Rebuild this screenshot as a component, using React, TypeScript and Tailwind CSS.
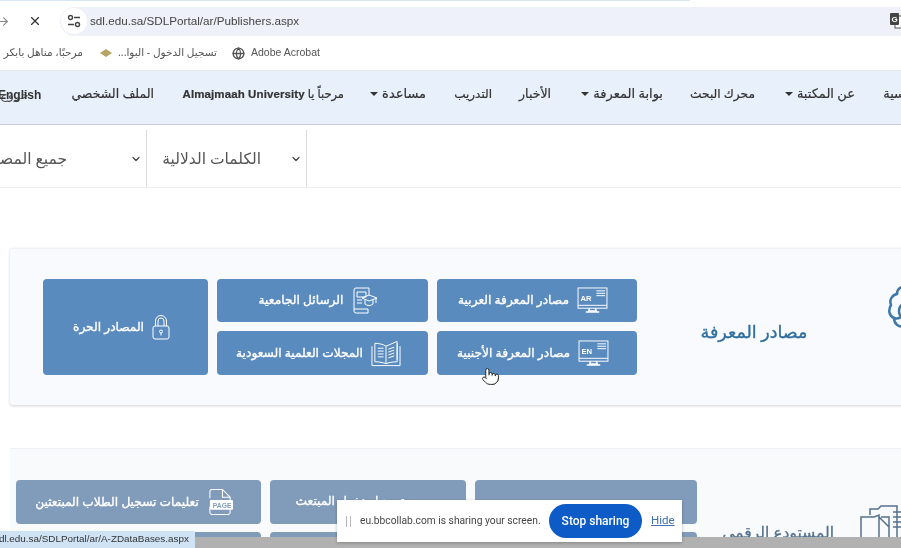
import { ChevronDown, X, ArrowRight, Globe, Pointer } from "lucide-react";

function Caret() {
  return <span className="inline-block w-0 h-0 border-x-[4px] border-x-transparent border-t-[4px] border-t-[#333] mr-1" />;
}

function NavItem({ className, label, caret }: { className: string; label: string; caret?: boolean }) {
  return (
    <div className={`shrink-0 flex items-center whitespace-nowrap text-[#333] [-webkit-text-stroke:0.2px] ${className}`}>
      <span>{label}</span>
      {caret && <Caret />}
    </div>
  );
}

function Monitor({ code }: { code: string }) {
  return (
    <svg width="31" height="27" viewBox="0 0 32 28" fill="none" stroke="#fff" strokeWidth="1" className="shrink-0">
      <rect x="1" y="1" width="30" height="21" />
      <path d="M1 19h30M20 4h9M20 6.500h9M20 9h9" />
      <path d="M13 22l-1 3h8l-1-3M9 26h14" strokeWidth="1.600" />
      <text x="3.500" y="15" fill="#fff" stroke="none" fontSize="8" fontWeight="700" fontFamily="Liberation Sans">{code}</text>
    </svg>
  );
}

function LockIcon() {
  return (
    <svg width="18" height="25" viewBox="0 0 18 25" fill="none" stroke="#fff" strokeWidth="1" className="shrink-0">
      <rect x="1" y="11" width="16" height="13" rx="2" />
      <path d="M3.500 11V6a5.500 5.500 0 0 1 11 0v5M6 11V6a3 3 0 0 1 6 0v5" />
      <circle cx="9" cy="16.500" r="1.500" />
      <path d="M9 18v2.500" />
    </svg>
  );
}

function ThesisIcon() {
  return (
    <svg width="27" height="27" viewBox="0 0 27 27" fill="none" stroke="#fff" strokeWidth="1" className="shrink-0">
      <path d="M3 24V3a2 2 0 0 1 2-2h13v7M3 22h14v4H5a2 2 0 0 1-2-2M6 5h9v5H6zM6 13h5M6 16h5" />
      <path d="M11 11l7-3 8 3-8 3zM14 13v4c2 2 6 2 8 0v-4M25 11v5" />
    </svg>
  );
}

function BookIcon() {
  return (
    <svg width="30" height="27" viewBox="0 0 31 27" fill="none" stroke="#fff" strokeWidth="1" className="shrink-0">
      <path d="M15.500 6v18M15.500 6C13 4 8 3 4 3v19c4 0 9 1 11.500 2 2.500-1 7.500-2 11.500-2V3M15.500 6L27 1v19" />
      <path d="M1 6v20h29V6M7 8h6M7 11h6M7 14h6M7 17h6M18 9l6-2M18 12l6-2M18 15l6-2M18 18l6-2" />
    </svg>
  );
}

function PageIcon() {
  return (
    <svg width="27" height="28" viewBox="0 0 28 28" fill="none" stroke="#fff" strokeWidth="1.100" className="shrink-0">
      <path d="M3 10V3a2 2 0 0 1 2-2h11l8 8v3M3 19v6a2 2 0 0 0 2 2h17a2 2 0 0 0 2-2v-3M16 1v8h8" />
      <rect x="3" y="12" width="24" height="10" fill="#fff" stroke="none" rx="1" />
      <text x="6" y="20" fill="#819bba" stroke="none" fontSize="7" fontWeight="700" fontFamily="Liberation Sans">PAGE</text>
    </svg>
  );
}

function BrainIcon() {
  return (
    <svg width="44" height="52" viewBox="0 0 44 52" fill="none" stroke="#3f78a8" strokeWidth="2.500" className="shrink-0">
      <path d="M20 3c-5-3-11 0-11 6-5 1-8 6-6 11-3 5-2 11 3 13 0 6 5 10 11 8 5 5 13 4 17-1" />
      <path d="M26 19c-7-4-15 0-15 7s7 10 13 7M22 8c-4 1-6 4-5 8M6 33c3 1 6 0 8-2" />
    </svg>
  );
}

function RepoIcon() {
  return (
    <svg width="44" height="46" viewBox="0 0 44 46" fill="none" stroke="#55718f" strokeWidth="1.500" className="shrink-0">
      <path d="M1 46V13h13l5-2v35M10 11V5h8l3-3h16v44M19 13l10 10v23M21 13h8v10M33 8h10M33 13h10M33 18h10M33 23h10" />
    </svg>
  );
}

function TuneIcon() {
  return (
    <svg width="14" height="14" viewBox="0 0 14 14" fill="none" stroke="#444" strokeWidth="1.400">
      <circle cx="3.500" cy="3.500" r="2" />
      <path d="M7 3.500h6M1 10.500h6" />
      <circle cx="10.500" cy="10.500" r="2" />
    </svg>
  );
}

function TranslateIcon() {
  return (
    <svg width="14" height="16" viewBox="0 0 14 16" className="shrink-0">
      <rect x="5" y="3" width="9" height="12" fill="#fff" stroke="#555" />
      <rect x="0" y="0" width="9" height="12" rx="1" fill="#444" />
      <text x="1.500" y="9" fill="#fff" fontSize="8" fontWeight="700" fontFamily="Liberation Sans">G</text>
    </svg>
  );
}

function Tile({ children, className }: { children: React.ReactNode; className: string }) {
  return (
    <div className={`flex items-center justify-center gap-2 pr-2 rounded-[4px] text-white text-[12.200px] [-webkit-text-stroke:0.35px] whitespace-nowrap ${className}`}>
      {children}
    </div>
  );
}

export default function App() {
  return (
    <div className="relative w-[901px] h-[548px] overflow-hidden bg-white font-['Noto_Sans','DejaVu_Sans',sans-serif] blur-[0.4px]">
      {/* browser tab strip edge */}
      <div className="h-[6px] flex items-start">
        <div className="w-[690px] h-px bg-[#d8e6fa]" />
      </div>

      {/* address bar */}
      <div className="h-[30px] flex items-center">
        <div className="w-[60px] shrink-0 relative h-full flex items-center">
          <ArrowRight size={13} className="text-[#888] -ml-[3px]" />
          <X size={14} className="text-[#333] ml-[18px]" strokeWidth={2} />
        </div>
        <div className="flex-1 h-[29px] rounded-l-full bg-[#eef1f9] flex items-center">
          <div className="w-[26px] h-[26px] ml-px rounded-full bg-white flex items-center justify-center shrink-0">
            <TuneIcon />
          </div>
          <span className="ml-[3px] text-[11.700px] text-[#444] font-['Liberation_Sans',sans-serif]">sdl.edu.sa/SDLPortal/ar/Publishers.aspx</span>
          <div className="ml-auto mr-[-3px] overflow-hidden"><TranslateIcon /></div>
        </div>
      </div>

      {/* bookmarks */}
      <div className="h-[34px] flex items-center text-[10.500px] text-[#555] whitespace-nowrap">
        <div className="w-[83px] shrink-0 overflow-hidden flex justify-end"><span dir="rtl">مرحبًا، مناهل بابكر العبيد</span></div>
        <svg width="12" height="8" viewBox="0 0 12 8" className="ml-[17px] shrink-0">
          <path d="M0 4L6 0l6 4-6 4z" fill="#b5a463" />
        </svg>
        <span dir="rtl" className="ml-[10px] w-[95px] shrink-0 text-right">تسجيل الدخول - البوا...</span>
        <Globe size={13} className="ml-[15px] text-[#555] shrink-0" strokeWidth={2.400} />
        <span className="ml-[6px] text-[10.500px] font-['Liberation_Sans',sans-serif]">Adobe Acrobat</span>
      </div>

      {/* nav */}
      <div dir="rtl" className="relative h-[55px] pb-[7px] bg-[#e8f1fb] border-t border-t-[#e3e7ee] border-b border-b-[#c9ced6] flex items-center gap-[28px] mr-[-27px]">
        <NavItem className="w-[45px] text-[13px]" label="الرئيسية" />
        <NavItem className="w-[72px] text-[13px]" label="عن المكتبة" caret />
        <NavItem className="w-[64px] text-[12.200px]" label="محرك البحث" />
        <NavItem className="w-[84px] text-[13px]" label="بوابة المعرفة" caret />
        <NavItem className="w-[31px] text-[12.500px]" label="الأخبار" />
        <NavItem className="w-[38px] text-[12px]" label="التدريب" />
        <NavItem className="w-[54px] text-[13px]" label="مساعدة" caret />
        <div className="w-[162px] shrink-0 whitespace-nowrap text-[11.500px] text-[#333] [-webkit-text-stroke:0.2px]">مرحباً يا <span className="font-['Liberation_Sans',sans-serif] font-bold tracking-[0.1px]">Almajmaah University</span></div>
        <NavItem className="w-[84px] text-[12.500px]" label="الملف الشخصي" />
        <div className="w-[42px] shrink-0 relative h-4 font-['Liberation_Sans',sans-serif] text-[12px] font-bold text-[#333]" dir="ltr">
          <span className="absolute left-0 top-0 -ml-[2px]">English</span>
          <span className="absolute left-0 top-0 text-[#444] font-normal">خروج</span>
        </div>
      </div>

      {/* search row */}
      <div className="mt-[5px] h-[58px] border-b border-b-[#eeeeee] flex items-center text-[#555] text-[15.500px]">
        <div className="w-[147px] h-full shrink-0 border-r border-r-[#dcdcdc] flex items-center justify-end pr-[4px] gap-[63px] overflow-hidden">
          <span dir="rtl" className="whitespace-nowrap shrink-0">جميع المصادر</span>
          <ChevronDown size={12} strokeWidth={2.500} className="text-[#444] shrink-0" />
        </div>
        <div className="w-[160px] h-full shrink-0 border-r border-r-[#dcdcdc] flex items-center justify-end pl-[16px] pr-[4px]">
          <span dir="rtl" className="whitespace-nowrap mr-[29px]">الكلمات الدلالية</span>
          <ChevronDown size={12} strokeWidth={2.500} className="text-[#444] shrink-0" />
        </div>
      </div>

      {/* knowledge sources card */}
      <div className="ml-[10px] mr-[-40px] mt-[60px] h-[157px] bg-[#f8fafe] rounded-[3px] border-t border-t-[#f0f2f6] shadow-[0_1px_3px_rgba(0,0,0,0.18)] flex items-start pl-[33px] pt-[30px]">
        <Tile className="w-[165px] h-[96px] bg-[#5a8bbf]">
          <span dir="rtl">المصادر الحرة</span>
          <LockIcon />
        </Tile>
        <div className="ml-[9px] grid grid-cols-[211px_200px] grid-rows-[43px_44px] gap-x-[9px] gap-y-[9px]">
          <Tile className="bg-[#5a8bbf]"><span dir="rtl">الرسائل الجامعية</span><ThesisIcon /></Tile>
          <Tile className="bg-[#5a8bbf]"><span dir="rtl">مصادر المعرفة العربية</span><Monitor code="AR" /></Tile>
          <Tile className="bg-[#5a8bbf]"><span dir="rtl">المجلات العلمية السعودية</span><BookIcon /></Tile>
          <Tile className="bg-[#5a8bbf]"><span dir="rtl">مصادر المعرفة الأجنبية</span><Monitor code="EN" /></Tile>
        </div>
        <div dir="rtl" className="ml-[63px] mt-[40px] w-[108px] text-center leading-[24px] text-[17.500px] text-[#2f6f9f] [-webkit-text-stroke:0.35px] whitespace-nowrap">مصادر المعرفة</div>
        <div className="ml-[80px] mt-[6px]"><BrainIcon /></div>
      </div>

      {/* digital repository card */}
      <div className="ml-[10px] mr-[-40px] mt-[43px] h-[200px] bg-[#f9fafc] border-t border-t-[#f1f2f5] flex pl-[6px] pt-[31px]">
        <div className="grid grid-cols-[245px_196px_222px] grid-rows-[44px_44px] gap-x-[9px] gap-y-[8px] shrink-0">
          <Tile className="bg-[#819bba]"><span dir="rtl">تعليمات تسجيل الطلاب المبتعثين</span><PageIcon /></Tile>
          <Tile className="bg-[#819bba] items-start pt-[12px]"><span dir="rtl" className="mr-[28px]">تسجيل دخول المبتعث</span></Tile>
          <Tile className="bg-[#819bba]"><span /></Tile>
          <Tile className="bg-[#819bba]"><span /></Tile>
          <Tile className="bg-[#819bba]"><span /></Tile>
          <Tile className="bg-[#819bba]"><span /></Tile>
        </div>
        <div dir="rtl" className="ml-[26px] mt-[41px] w-[111px] h-[24px] text-right text-[15.500px] text-[#55718f] [-webkit-text-stroke:0.3px] whitespace-nowrap">المستودع الرقمي</div>
        <div className="ml-[26px] mt-[24px]"><RepoIcon /></div>
      </div>

      {/* bottom video band */}
      <div className="absolute left-0 right-0 bottom-0 h-[11px] bg-[#b1b1b1]" />

      {/* status bubble */}
      <div className="absolute left-0 bottom-0 w-[195px] h-[17px] bg-[#cfe3f5] flex items-center overflow-hidden">
        <span className="-ml-[6px] text-[9.900px] text-[#333] font-['Liberation_Sans',sans-serif] whitespace-nowrap">sdl.edu.sa/SDLPortal/ar/A-ZDataBases.aspx</span>
      </div>

      {/* screen share bar */}
      <div className="absolute left-[337px] top-[500px] w-[345px] h-[42px] bg-white shadow-[0_1px_3px_rgba(0,0,0,0.25)] flex items-center font-['Roboto',sans-serif]">
        <div className="ml-[9px] w-[5px] h-[11px] border-x border-x-[#b8b8b8]" />
        <span className="ml-[9px] w-[180px] shrink-0 text-[10.250px] text-[#444] whitespace-nowrap">eu.bbcollab.com is sharing your screen.</span>
        <div className="ml-[9px] w-[93px] h-[34px] rounded-full bg-[#0d5bc6] text-white text-[12px] font-medium flex items-center justify-center shrink-0">Stop sharing</div>
        <span className="ml-[9px] text-[11.500px] text-[#3f6fb5] underline">Hide</span>
      </div>

      {/* mouse pointer */}
      <Pointer size={19} strokeWidth={1.200} fill="#fff" className="absolute left-[481px] top-[367px] text-[#222]" />
    </div>
  );
}
